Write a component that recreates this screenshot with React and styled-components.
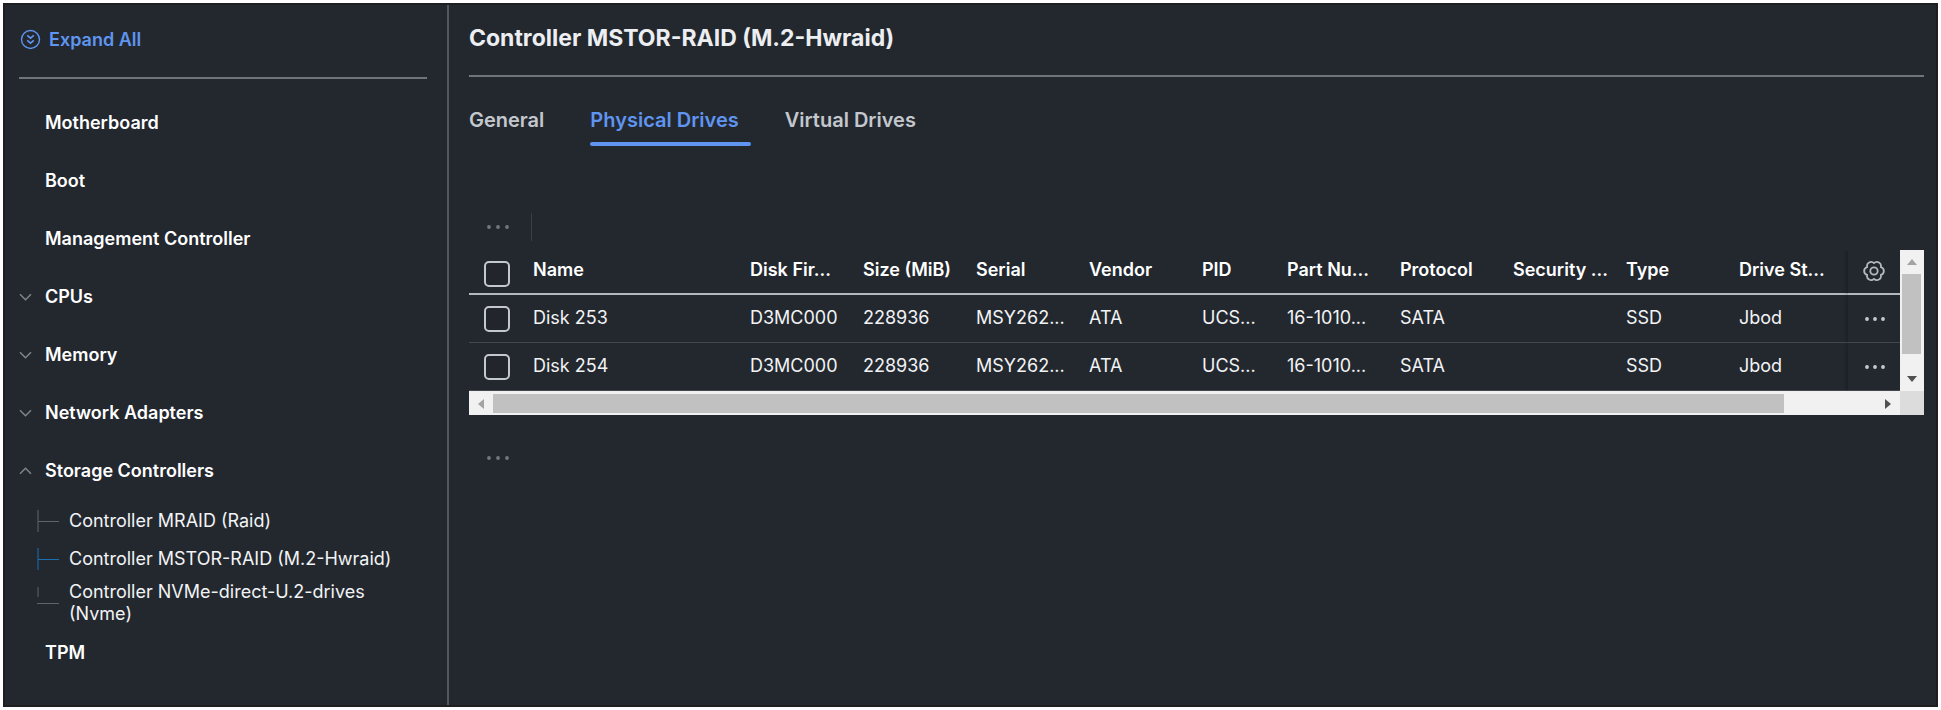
import { useState } from "react";
import styled, { createGlobalStyle } from "styled-components";

const GlobalStyle = createGlobalStyle`
  * {
    box-sizing: border-box;
  }
  body {
    margin: 0;
    background-color: #ffffff;
    font-family: Inter, "Liberation Sans", sans-serif;
    color: #ffffff;
  }
  button {
    font-family: inherit;
    border: 0;
    padding: 0;
    background: none;
    cursor: pointer;
  }
`;

const Page = styled.div`
  display: flex;
  min-height: calc(100vh - 6px);
  margin: 3px;
  border: 2px solid #1f1f22;
  background-color: #23282f;
`;

const Sidebar = styled.aside`
  flex: 0 0 444px;
  padding: 0 20px 0 14px;
  border-right: 2px solid #52565d;
`;

const ExpandBar = styled.div`
  display: flex;
  align-items: center;
  height: 74px;
  border-bottom: 2px solid #6f737b;
`;

const ExpandButton = styled.button`
  display: flex;
  align-items: center;
  gap: 8px;
  padding: 0 0 3px 1px;
  font-size: 18px;
  font-weight: 600;
  line-height: 24px;
  color: #5f95f0;
`;

const NavList = styled.ul`
  list-style: none;
  margin: 15px 0 0;
  padding: 0;
`;

const NavButton = styled.button`
  display: flex;
  align-items: center;
  width: 100%;
  height: 58px;
  font-size: 18px;
  font-weight: 600;
  line-height: 22px;
  color: #ffffff;
  text-align: left;
`;

const ChevronSlot = styled.span`
  display: flex;
  flex: 0 0 26px;
`;

const SubList = styled.ul`
  list-style: none;
  margin: 2px 0 -4px;
  padding: 0 20px 0 18px;
`;

const SubItem = styled.li`
  display: flex;
  align-items: center;
  min-height: 38px;
  padding: 3px 0;
`;

const SubLink = styled.a`
  margin-left: 10px;
  font-size: 18px;
  line-height: 22px;
  color: #f2f3f5;
  text-decoration: none;
`;

const Branch = styled.svg`
  flex: 0 0 22px;
  stroke: ${(props) => (props.$active ? "#1a6fb0" : "#5f646c")};
`;

const Main = styled.main`
  flex: 1;
  min-width: 0;
  padding: 0 12px 0 20px;
`;

const Title = styled.h1`
  display: flex;
  align-items: center;
  height: 72px;
  margin: 0;
  padding-bottom: 5px;
  border-bottom: 2px solid #6f737b;
  font-size: 23px;
  font-weight: 700;
  line-height: 28px;
  color: #eceef1;
`;

const Tabs = styled.div`
  display: flex;
  gap: 34px;
  margin-top: 28px;
`;

const Tab = styled.button`
  height: 41px;
  padding: 0 12px 8px 0;
  border-bottom: 4px solid transparent;
  position: relative;
  font-size: 20px;
  font-weight: 600;
  line-height: 24px;
  color: ${(props) => (props.$active ? "#5f95f0" : "#c4c8ce")};
  &::after {
    content: "";
    position: absolute;
    left: 0;
    right: 0;
    bottom: -4px;
    height: 4px;
    border-radius: 2px;
    background-color: ${(props) => (props.$active ? "#5f95f0" : "transparent")};
  }
`;

const Toolbar = styled.div`
  display: flex;
  align-items: center;
  height: 28px;
  margin-top: ${(props) => props.$top}px;
  padding-left: 17px;
`;

const ToolbarDivider = styled.span`
  width: 1px;
  height: 28px;
  margin-left: 21px;
  background-color: #3a3f47;
`;

const MoreButton = styled.button`
  display: flex;
  color: ${(props) => (props.$muted ? "#737880" : "#c6cad1")};
`;

const TableFrame = styled.div`
  display: grid;
  grid-template-columns: 1fr 24px;
  margin-top: 9px;
`;

const Table = styled.table`
  width: 100%;
  table-layout: fixed;
  border-collapse: separate;
  border-spacing: 0;
`;

const Col = styled.col`
  width: ${(props) => (props.$width ? `${props.$width}px` : "auto")};
`;

const HeadCell = styled.th`
  height: 45px;
  padding: 0 16px 3px 0;
  border-bottom: 2px solid #b4b8c1;
  font-size: 18px;
  font-weight: 600;
  line-height: 22px;
  text-align: left;
  white-space: nowrap;
  overflow: hidden;
`;

const Cell = styled.td`
  height: 48px;
  padding: 0 16px 1px 0;
  border-bottom: 1px solid #434850;
  font-size: 18px;
  line-height: 22px;
  color: #f2f3f5;
  white-space: nowrap;
  overflow: hidden;
`;

const CheckHead = styled(HeadCell)`
  padding: 5px 0 0 15px;
`;

const CheckCell = styled(Cell)`
  padding: 0 0 0 15px;
`;

const PinnedHead = styled(HeadCell)`
  padding: 0 0 2px 15px;
  overflow: visible;
  box-shadow: -2px 0 3px rgba(0, 0, 0, 0.2);
  clip-path: inset(0 0 0 -6px);
`;

const PinnedCell = styled(Cell)`
  padding: 0 0 0 17px;
  overflow: visible;
  box-shadow: -2px 0 3px rgba(0, 0, 0, 0.2);
  clip-path: inset(0 0 0 -6px);
`;

const IconButton = styled.button`
  display: flex;
  color: #b4b8c1;
`;

const Checkbox = styled.input`
  appearance: none;
  display: block;
  width: 26px;
  height: 26px;
  margin: 0;
  border: 2px solid #c3c7d0;
  border-radius: 5px;
  background-color: #22262c;
  &:checked {
    background-color: #5f95f0;
  }
`;

const ScrollBar = styled.div`
  display: flex;
  flex-direction: ${(props) => (props.$vertical ? "column" : "row")};
  padding: ${(props) => (props.$vertical ? "0 3px 0 2px" : "3px 0 2px")};
  background-color: #f1f1f1;
`;

const ScrollArrow = styled.button`
  display: flex;
  align-items: center;
  justify-content: center;
  flex: 0 0 24px;
  color: ${(props) => (props.$dim ? "#a3a3a3" : "#505050")};
`;

const ScrollTrack = styled.div`
  display: flex;
  flex: 1;
  flex-direction: inherit;
  &::after {
    content: "";
    flex: 1;
  }
`;

const ScrollThumb = styled.div`
  flex: ${(props) => props.$share};
  background-color: #c1c1c1;
`;

const ScrollCorner = styled.div`
  height: 24px;
  background-color: #dcdcdc;
`;

const ExpandIcon = () => (
  <svg width="21" height="21" viewBox="0 0 21 21" fill="none" stroke="currentColor" strokeWidth="1.4" aria-hidden="true">
    <circle cx="10.5" cy="10.5" r="9" />
    <path d="M7.2 6.3l3.3 2.9 3.3-2.9M7.2 11.3l3.3 2.9 3.3-2.9" strokeWidth="1.6" />
  </svg>
);

const Chevron = ({ open }) => (
  <svg width="14" height="14" viewBox="0 0 14 14" fill="none" stroke="#82868d" strokeWidth="1.4" aria-hidden="true">
    <path d={open ? "M1 9.8l5.5-5.6 5.5 5.6" : "M1 4.2l5.5 5.6 5.5-5.6"} />
  </svg>
);

const Dots = ({ width, step }) => (
  <svg width={width} height="6" viewBox={`0 0 ${width} 6`} fill="currentColor" aria-hidden="true">
    {[-1, 0, 1].map((i) => (
      <circle key={i} cx={width / 2 + i * step} cy="3" r="1.9" />
    ))}
  </svg>
);

// Six round lobes, each an arc between two notches
const gearPath = Array.from({ length: 7 }, (_, i) => {
  const angle = ((30 + i * 60) * Math.PI) / 180;
  const x = (11 + 7.9 * Math.cos(angle)).toFixed(2);
  const y = (11 + 7.9 * Math.sin(angle)).toFixed(2);
  return i ? `A4.1 4.1 0 0 1 ${x} ${y}` : `M${x} ${y}`;
}).join("");

const GearIcon = () => (
  <svg
    width="22"
    height="22"
    viewBox="0 0 22 22"
    fill="none"
    stroke="currentColor"
    strokeWidth="1.8"
    strokeLinejoin="round"
    aria-hidden="true"
  >
    <path d={`${gearPath}Z`} />
    <circle cx="11" cy="11" r="3.7" />
  </svg>
);

const arrows = {
  up: "M1 9h10L6 3z",
  down: "M1 3h10L6 9z",
  left: "M9 1v10L3 6z",
  right: "M3 1v10l6-5z",
};

const Arrow = ({ to }) => (
  <svg width="12" height="12" viewBox="0 0 12 12" fill="currentColor" aria-hidden="true">
    <path d={arrows[to]} />
  </svg>
);

const controllers = [
  { name: "Controller MRAID (Raid)" },
  { name: "Controller MSTOR-RAID (M.2-Hwraid)", active: true },
  { name: "Controller NVMe-direct-U.2-drives (Nvme)", last: true },
];

const navItems = [
  { name: "Motherboard" },
  { name: "Boot" },
  { name: "Management Controller" },
  { name: "CPUs", group: true },
  { name: "Memory", group: true },
  { name: "Network Adapters", group: true },
  { name: "Storage Controllers", group: true, children: controllers },
  { name: "TPM" },
];

const tabs = ["General", "Physical Drives", "Virtual Drives"];

const columns = [
  { label: "Name", key: "name" },
  { label: "Disk Fir...", key: "firmware", width: 113 },
  { label: "Size (MiB)", key: "size", width: 113 },
  { label: "Serial", key: "serial", width: 113 },
  { label: "Vendor", key: "vendor", width: 113 },
  { label: "PID", key: "pid", width: 85 },
  { label: "Part Nu...", key: "part", width: 113 },
  { label: "Protocol", key: "protocol", width: 113 },
  { label: "Security ...", key: "security", width: 113 },
  { label: "Type", key: "type", width: 113 },
  { label: "Drive St...", key: "state", width: 109 },
];

const disk = {
  firmware: "D3MC000",
  size: "228936",
  serial: "MSY262...",
  vendor: "ATA",
  pid: "UCS...",
  part: "16-1010...",
  protocol: "SATA",
  security: "",
  type: "SSD",
  state: "Jbod",
};

const drives = [
  { name: "Disk 253", ...disk },
  { name: "Disk 254", ...disk },
];

const SideNav = () => (
  <Sidebar>
    <ExpandBar>
      <ExpandButton>
        <ExpandIcon />
        Expand All
      </ExpandButton>
    </ExpandBar>
    <NavList>
      {navItems.map((item) => (
        <li key={item.name}>
          <NavButton aria-expanded={item.group ? Boolean(item.children) : undefined}>
            <ChevronSlot>{item.group && <Chevron open={item.children} />}</ChevronSlot>
            {item.name}
          </NavButton>
          {item.children && (
            <SubList>
              {item.children.map((child) => (
                <SubItem key={child.name}>
                  <Branch width="22" height="32" viewBox="0 0 22 32" $active={child.active} aria-hidden="true">
                    <path d={child.last ? "M1 0v10M0 16.5h22" : "M1 5v22M1 16.5h21"} />
                  </Branch>
                  <SubLink href="#">{child.name}</SubLink>
                </SubItem>
              ))}
            </SubList>
          )}
        </li>
      ))}
    </NavList>
  </Sidebar>
);

const DriveTable = () => (
  <TableFrame>
    <Table>
      <colgroup>
        <Col $width={64} />
        {columns.map((column) => (
          <Col key={column.key} $width={column.width} />
        ))}
        <Col $width={52} />
      </colgroup>
      <thead>
        <tr>
          <CheckHead>
            <Checkbox type="checkbox" aria-label="Select all drives" />
          </CheckHead>
          {columns.map((column) => (
            <HeadCell key={column.key}>{column.label}</HeadCell>
          ))}
          <PinnedHead>
            <IconButton aria-label="Table settings">
              <GearIcon />
            </IconButton>
          </PinnedHead>
        </tr>
      </thead>
      <tbody>
        {drives.map((drive) => (
          <tr key={drive.name}>
            <CheckCell>
              <Checkbox type="checkbox" aria-label={`Select ${drive.name}`} />
            </CheckCell>
            {columns.map((column) => (
              <Cell key={column.key}>{drive[column.key]}</Cell>
            ))}
            <PinnedCell>
              <MoreButton aria-label={`${drive.name} actions`}>
                <Dots width={20} step={8} />
              </MoreButton>
            </PinnedCell>
          </tr>
        ))}
      </tbody>
    </Table>
    <ScrollBar $vertical>
      <ScrollArrow $dim aria-label="Scroll up">
        <Arrow to="up" />
      </ScrollArrow>
      <ScrollTrack>
        <ScrollThumb $share={6} />
      </ScrollTrack>
      <ScrollArrow aria-label="Scroll down">
        <Arrow to="down" />
      </ScrollArrow>
    </ScrollBar>
    <ScrollBar>
      <ScrollArrow $dim aria-label="Scroll left">
        <Arrow to="left" />
      </ScrollArrow>
      <ScrollTrack>
        <ScrollThumb $share={14} />
      </ScrollTrack>
      <ScrollArrow aria-label="Scroll right">
        <Arrow to="right" />
      </ScrollArrow>
    </ScrollBar>
    <ScrollCorner />
  </TableFrame>
);

const App = () => {
  const [activeTab, setActiveTab] = useState("Physical Drives");

  return (
    <>
      <GlobalStyle />
      <Page>
        <SideNav />
        <Main>
          <Title>Controller MSTOR-RAID (M.2-Hwraid)</Title>
          <Tabs role="tablist">
            {tabs.map((tab) => (
              <Tab
                key={tab}
                role="tab"
                aria-selected={tab === activeTab}
                $active={tab === activeTab}
                onClick={() => setActiveTab(tab)}
              >
                {tab}
              </Tab>
            ))}
          </Tabs>
          <Toolbar $top={67}>
            <MoreButton $muted aria-label="Bulk actions">
              <Dots width={24} step={9} />
            </MoreButton>
            <ToolbarDivider />
          </Toolbar>
          <DriveTable />
          <Toolbar $top={29}>
            <MoreButton $muted aria-label="More actions">
              <Dots width={24} step={9} />
            </MoreButton>
          </Toolbar>
        </Main>
      </Page>
    </>
  );
};

export default App;
